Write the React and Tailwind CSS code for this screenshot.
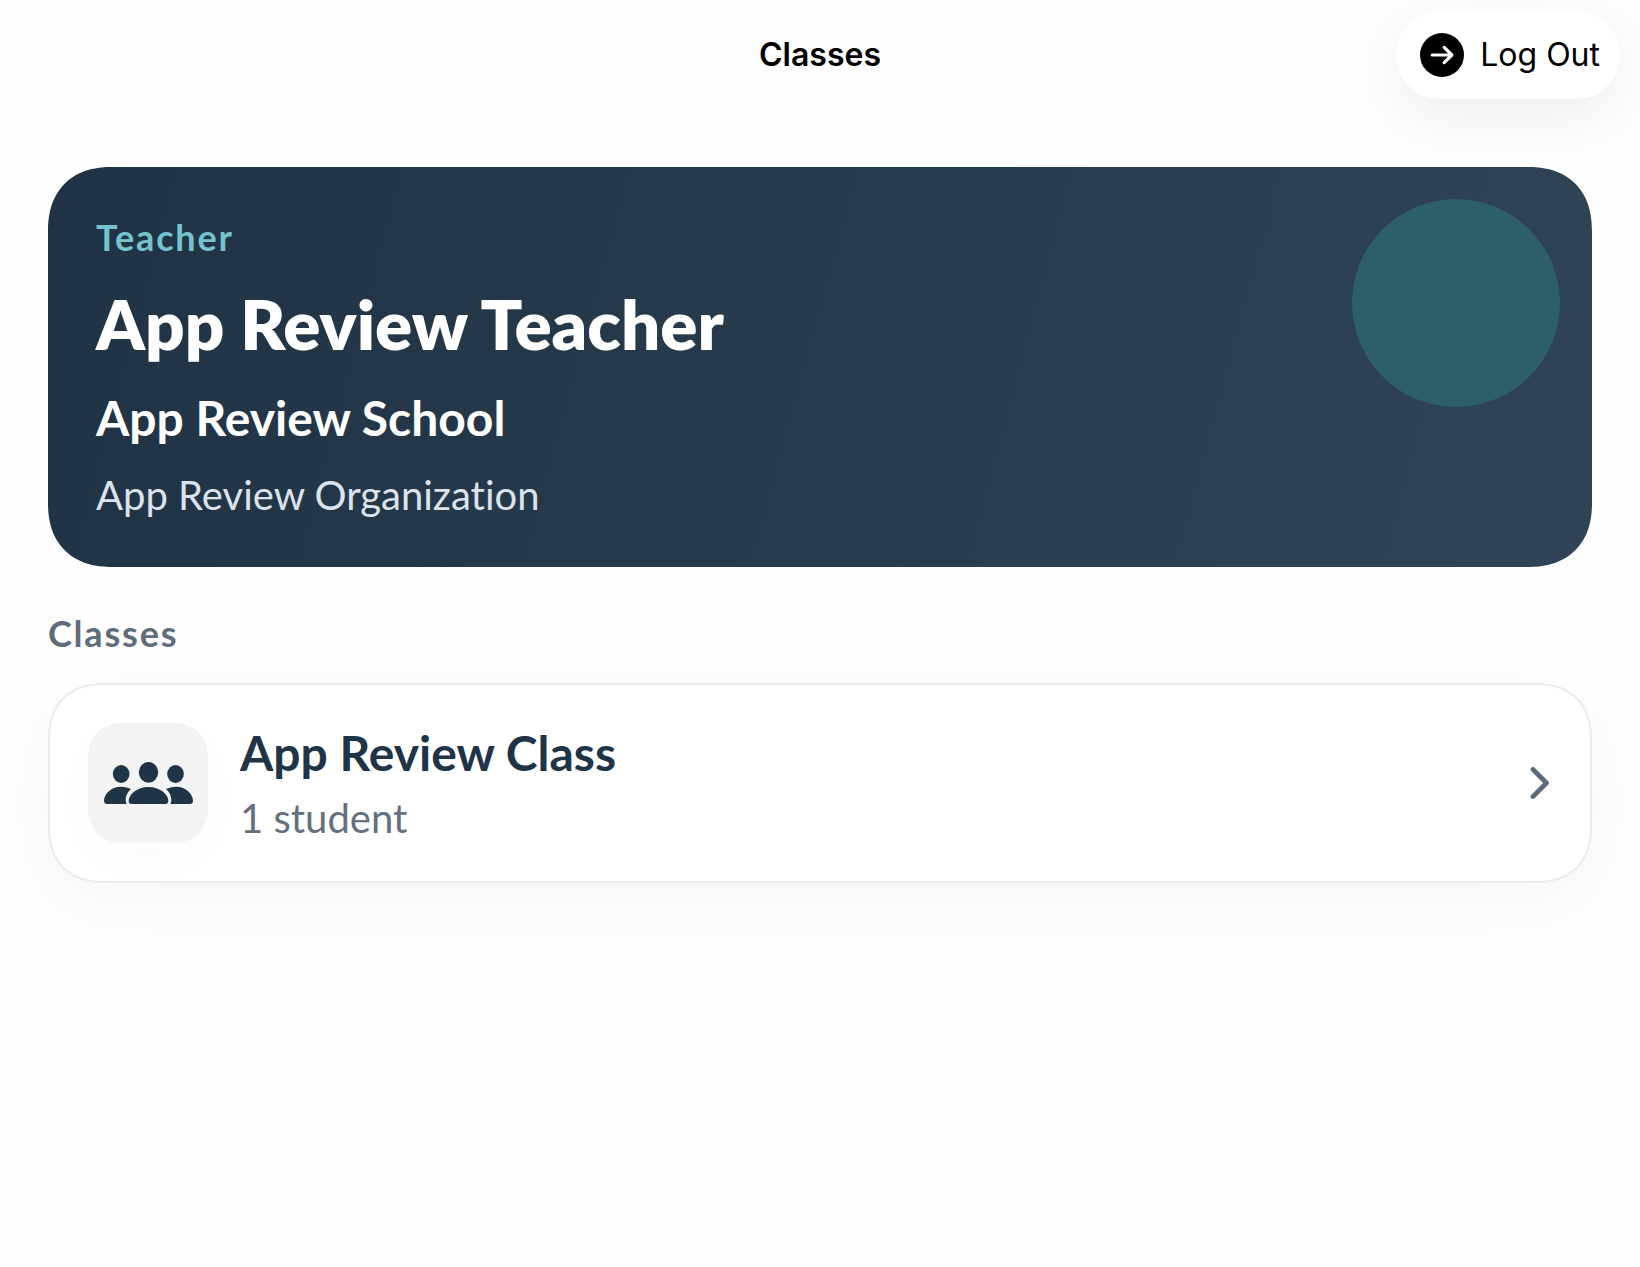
function LogOutIcon() {
  return (
    <svg viewBox="0 0 44 44" className="size-11 shrink-0" fill="none" aria-hidden="true">
      <circle cx="22" cy="22" r="22" fill="#000" />
      <path d="M12.2 22H31.500M24.2 14.4L31.8 22L24.2 29.6" stroke="#fff" strokeWidth="3.2" strokeLinecap="round" strokeLinejoin="round" />
    </svg>
  );
}

function PeopleIcon() {
  return (
    <svg viewBox="0 0 267 126" className="w-[89px]" fill="#1f3446" aria-hidden="true">
      <ellipse cx="51.500" cy="36" rx="25" ry="27" />
      <ellipse cx="214.500" cy="36" rx="25" ry="27" />
      <ellipse cx="133.500" cy="31" rx="29" ry="31" />
      <path d="M10 126C3 126 0 122 0 116C0 97 20 74 51 74C63 74 73 77 81 81C71 89 65 102 65 113C65 118 66 122 68 126Z" />
      <path d="M257 126C264 126 267 122 267 116C267 97 247 74 216 74C204 74 194 77 186 81C196 89 202 102 202 113C202 118 201 122 199 126Z" />
      <path d="M84 126C77 126 74 122 74 116C74 100 96 75 133.500 75C171 75 193 100 193 116C193 122 190 126 183 126Z" />
    </svg>
  );
}

function Chevron() {
  return (
    <svg viewBox="0 0 20 32" className="h-8 w-5 shrink-0" fill="none" aria-hidden="true">
      <path d="M3 2.500L16.500 16L3 29.500" stroke="#5c6a79" strokeWidth="4.8" strokeLinecap="round" strokeLinejoin="round" />
    </svg>
  );
}

export default function App() {
  return (
    <div className="min-h-screen bg-[#fefefe] font-[Lato,sans-serif] [font-variant-ligatures:none]">
      <header className="grid grid-cols-[1fr_auto_1fr] items-center px-5 pt-[11px] font-[Inter,sans-serif] text-[32px] leading-[44px] text-black">
        <h1 className="col-start-2 font-semibold">Classes</h1>
        <button
          type="button"
          className="flex h-22 items-center gap-4 justify-self-end rounded-full bg-white pr-5 pl-6 shadow-[0_16px_64px_rgba(0,0,0,0.07)]"
        >
          <LogOutIcon />
          Log Out
        </button>
      </header>

      <main className="px-12 pt-17">
        <section className="relative overflow-hidden rounded-[64px] bg-linear-[105deg,#203345,#273c4c_55%,#304456] p-12 [corner-shape:superellipse(1.2)]">
          <div className="absolute top-8 right-8 size-52 rounded-full bg-[#2d5f68]" />
          <div className="relative flex flex-col gap-6">
            <p className="text-[36px] leading-[44px] font-bold tracking-wider text-[#75c4cd]">Teacher</p>
            <h2 className="text-[69px] leading-[82px] font-extrabold text-white">App Review Teacher</h2>
            <p className="text-[48px] leading-[58px] font-bold text-white">App Review School</p>
            <p className="text-[40px] leading-[48px] text-[#dce3ec]">App Review Organization</p>
          </div>
        </section>

        <h2 className="mt-11 text-[36px] leading-[44px] font-bold tracking-wider text-[#5f6c7b]">Classes</h2>

        <button
          type="button"
          className="mt-7 flex w-full items-center gap-8 rounded-[56px] border-2 border-[#ececed] bg-white py-[38px] pr-10 pl-[38px] text-left shadow-[0_20px_72px_rgba(0,0,0,0.035)] [corner-shape:superellipse(1.2)]"
        >
          <span className="flex size-30 shrink-0 items-center justify-center rounded-[32px] bg-[#f3f3f3] shadow-[0_16px_48px_rgba(0,0,0,0.02)]">
            <PeopleIcon />
          </span>
          <span className="flex grow flex-col gap-3">
            <span className="text-[48px] leading-[58px] font-bold text-[#1f3446]">App Review Class</span>
            <span className="text-[40px] leading-[48px] text-[#64707e]">1 student</span>
          </span>
          <Chevron />
        </button>
      </main>
    </div>
  );
}
